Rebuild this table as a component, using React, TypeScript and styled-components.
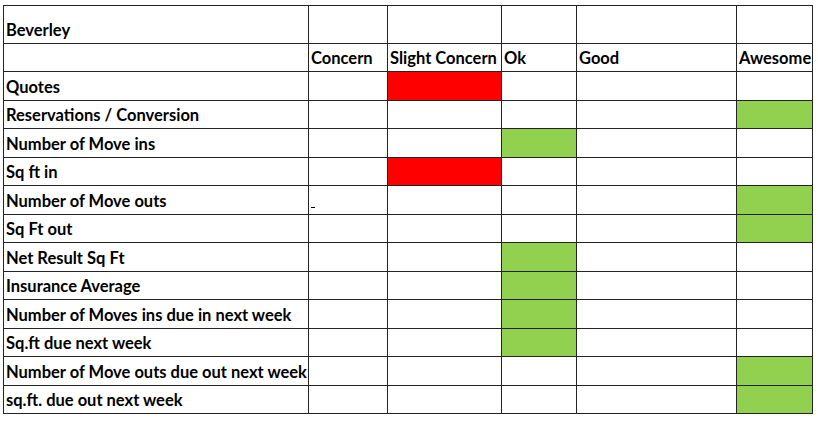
import React from "react";
import styled, { createGlobalStyle } from "styled-components";

type Rating = "slight" | "ok" | "awesome";

const headers = ["Concern", "Slight Concern", "Ok", "Good", "Awesome"];

const ratingColumn: Record<Rating, number> = {
  slight: 1,
  ok: 2,
  awesome: 4,
};

const rows: { label: string; rating: Rating; mark?: boolean }[] = [
  { label: "Quotes", rating: "slight" },
  { label: "Reservations / Conversion", rating: "awesome" },
  { label: "Number of Move ins", rating: "ok" },
  { label: "Sq ft in", rating: "slight" },
  { label: "Number of Move outs", rating: "awesome", mark: true },
  { label: "Sq Ft out", rating: "awesome" },
  { label: "Net Result Sq Ft", rating: "ok" },
  { label: "Insurance Average", rating: "ok" },
  { label: "Number of Moves ins due in next week", rating: "ok" },
  { label: "Sq.ft due next week", rating: "ok" },
  { label: "Number of Move outs due out next week", rating: "awesome" },
  { label: "sq.ft. due out next week", rating: "awesome" },
];

const fills: Record<Rating, string> = {
  slight: "#ff0000",
  ok: "#92d050",
  awesome: "#92d050",
};

const App = () => (
  <>
    <GlobalStyle />
    <Sheet>
      <Grid>
        <Cell>Beverley</Cell>
        {headers.map((h) => (
          <Cell key={`top-${h}`} />
        ))}
        <Cell />
        {headers.map((h) => (
          <Cell key={h}>{h}</Cell>
        ))}
        {rows.map((row) => (
          <React.Fragment key={row.label}>
            <Cell>{row.label}</Cell>
            {headers.map((h, i) => (
              <Cell
                key={h}
                $fill={i === ratingColumn[row.rating] ? fills[row.rating] : undefined}
              >
                {row.mark && i === 0 ? <Mark /> : null}
              </Cell>
            ))}
          </React.Fragment>
        ))}
      </Grid>
    </Sheet>
  </>
);

export default App;

const GlobalStyle = createGlobalStyle`
  body {
    margin: 0;
    background: #ffffff;
  }
`;

const Sheet = styled.div`
  padding: 5px 0 0 3px;
`;

const Grid = styled.div`
  display: inline-grid;
  grid-template-columns: 304px 78px 113px 74px 159px 75px;
  grid-template-rows: 37px 27px repeat(6, 28px 27px);
  gap: 1px;
  padding: 1px;
  background: #232323;
`;

const Cell = styled.div<{ $fill?: string }>`
  display: flex;
  align-items: flex-end;
  padding: 0 0 5px 2px;
  background: ${({ $fill }) => $fill ?? "#ffffff"};
  font-family: Lato, "Liberation Sans", sans-serif;
  font-weight: 700;
  font-size: 16.5px;
  line-height: 16px;
  color: #000000;
  white-space: nowrap;
  overflow: hidden;
`;

const Mark = styled.span`
  display: block;
  width: 4px;
  height: 1px;
  margin: 0 0 1px 0;
  background: #000000;
`;
